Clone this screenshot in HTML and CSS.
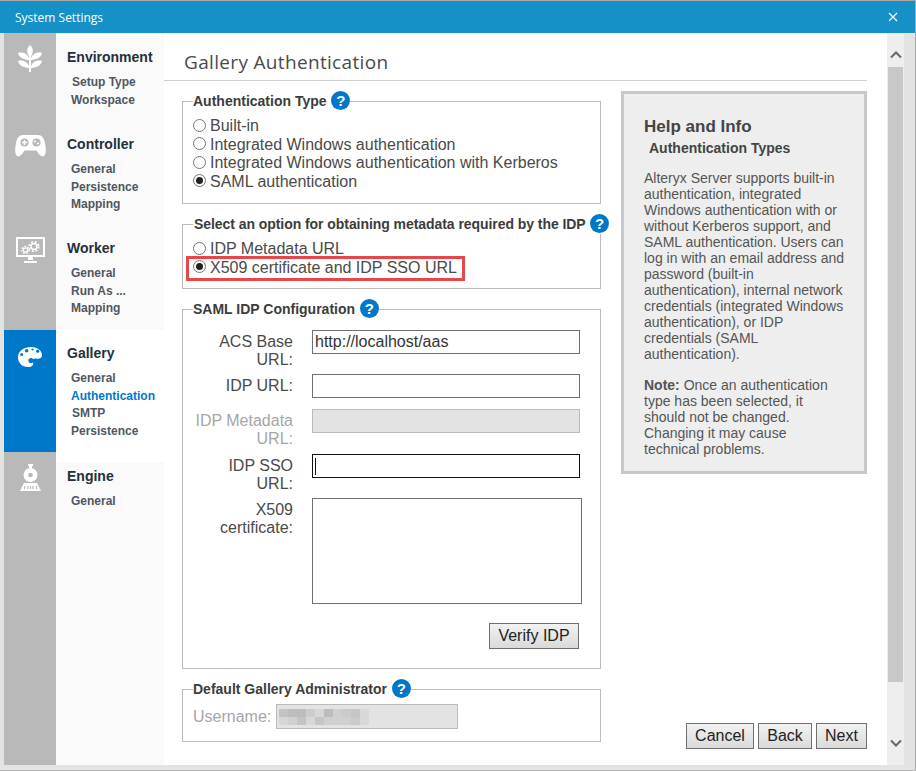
FILE: index.html
```html
<!DOCTYPE html>
<html lang="en">
<head>
    <meta charset="UTF-8">
    <title>System Settings</title>
    <link rel="stylesheet" href="styles.css">
</head>
<body>
<div class="window">
    <div class="titlebar">
        <span class="titlebar-text">System Settings</span>
        <svg class="close-icon" width="10" height="10" viewBox="0 0 10 10"><path d="M1 1l8 8M9 1l-8 8" stroke="#fff" stroke-width="1.2" fill="none"/></svg>
    </div>
    <div class="window-body">
        <nav class="sidebar">
            <div class="nav-section nav-env">
                <div class="nav-rail">
                    <svg class="icon-wheat" width="24" height="27" viewBox="0 0 24 27" fill="#fff">
                        <path d="M12 0C15.500 3 16 8 12 12.500C8 8 8.500 3 12 0Z"/>
                        <path d="M11.500 15C7 15 1 13 0 8C5 6.500 10.500 9 11.500 15Z"/>
                        <path d="M12.500 15C17 15 23 13 24 8C19 6.500 13.500 9 12.500 15Z"/>
                        <path d="M11.500 23C7 23 1 21 0 16C5 14.500 10.500 17 11.500 23Z"/>
                        <path d="M12.500 23C17 23 23 21 24 16C19 14.500 13.500 17 12.500 23Z"/>
                        <rect x="11" y="10" width="2" height="17"/>
                    </svg>
                </div>
                <div class="nav-body">
                    <div class="nav-title">Environment</div>
                    <a class="nav-link nudge">Setup Type</a>
                    <a class="nav-link">Workspace</a>
                </div>
            </div>
            <div class="nav-section nav-controller">
                <div class="nav-rail">
                    <svg class="icon-gamepad" width="31" height="22" viewBox="0 0 31 22">
                        <path fill="#fff" d="M8 0H23C27 0 29 3 30 8C31 13 31.500 19 29 21C27 22.500 24 20 21.500 15.500H9.500C7 20 4 22.500 2 21C-.5 19 0 13 1 8C2 3 4 0 8 0Z"/>
                        <circle cx="9.500" cy="7.500" r="4" fill="#b9b9b9"/>
                        <circle cx="21.500" cy="7.500" r="4" fill="#b9b9b9"/>
                        <path d="M9.500 5v5M7 7.500h5" stroke="#fff" stroke-width="1.500"/>
                        <circle cx="20" cy="6.500" r="1.100" fill="#fff"/>
                        <circle cx="23" cy="8.500" r="1.100" fill="#fff"/>
                    </svg>
                </div>
                <div class="nav-body">
                    <div class="nav-title">Controller</div>
                    <a class="nav-link">General</a>
                    <a class="nav-link">Persistence</a>
                    <a class="nav-link">Mapping</a>
                </div>
            </div>
            <div class="nav-section nav-worker">
                <div class="nav-rail">
                    <svg class="icon-monitor" width="29" height="26" viewBox="0 0 29 26" fill="none" stroke="#fff">
                        <rect x="1" y="1" width="27" height="18" stroke-width="2"/>
                        <circle cx="9.500" cy="13" r="2.200" stroke-width="1.300"/>
                        <circle cx="9.500" cy="13" r="3.600" stroke-width="1.400" stroke-dasharray="1.600 1.500"/>
                        <circle cx="18" cy="9.500" r="3" stroke-width="1.500"/>
                        <circle cx="18" cy="9.500" r="4.800" stroke-width="1.600" stroke-dasharray="2 1.800"/>
                        <path d="M12 20h5v3h-5z" fill="#fff" stroke="none"/>
                        <path d="M8 24h13v2H8z" fill="#fff" stroke="none"/>
                    </svg>
                </div>
                <div class="nav-body">
                    <div class="nav-title">Worker</div>
                    <a class="nav-link">General</a>
                    <a class="nav-link">Run As ...</a>
                    <a class="nav-link">Mapping</a>
                </div>
            </div>
            <div class="nav-section nav-gallery active">
                <div class="nav-rail">
                    <svg class="icon-palette" width="24" height="20" viewBox="0 0 24 20">
                        <path fill="#fff" d="M13 0C20 0 24 4 24 8C24 12 20 12 18 11.500C15.500 11 14 12.500 15 15C16 18 14 20 10 20C4 20 0 16 0 10C0 4 6 0 13 0Z"/>
                        <circle cx="8.700" cy="3.700" r="1.800" fill="#0078c9"/>
                        <circle cx="14.500" cy="2.500" r="1.100" fill="#0078c9"/>
                        <circle cx="19.700" cy="4.200" r="1.600" fill="#0078c9"/>
                        <circle cx="3.700" cy="7.500" r="1.500" fill="#0078c9"/>
                        <circle cx="13" cy="13.500" r="2.600" fill="#0078c9"/>
                    </svg>
                </div>
                <div class="nav-body">
                    <div class="nav-title">Gallery</div>
                    <a class="nav-link">General</a>
                    <a class="nav-link current">Authentication</a>
                    <a class="nav-link nudge">SMTP</a>
                    <a class="nav-link">Persistence</a>
                </div>
            </div>
            <div class="nav-section nav-engine">
                <div class="nav-rail">
                    <svg class="icon-train" width="21" height="27" viewBox="0 0 21 27">
                        <path fill="#fff" d="M8 0h5v2h-1v2h-3V2H8z"/>
                        <circle cx="10.500" cy="11" r="7" fill="#fff"/>
                        <circle cx="10.500" cy="11" r="2.300" fill="#b9b9b9"/>
                        <path fill="#fff" d="M4 19H17L21 27H0Z"/>
                        <path d="M4.500 22v3M8 22v3M10.500 22v3M13 22v3M16.500 22v3" stroke="#b9b9b9" stroke-width="1.200"/>
                    </svg>
                </div>
                <div class="nav-body">
                    <div class="nav-title">Engine</div>
                    <a class="nav-link">General</a>
                </div>
            </div>
        </nav>

        <main class="content">
            <h1 class="page-title">Gallery Authentication</h1>
            <div class="columns">
                <div class="form-col">
                    <fieldset class="group group-type">
                        <legend class="group-legend">Authentication Type <span class="help-dot">?</span></legend>
                        <label class="radio-row"><input type="radio" name="auth"> Built-in</label>
                        <label class="radio-row"><input type="radio" name="auth"> Integrated Windows authentication</label>
                        <label class="radio-row"><input type="radio" name="auth"> Integrated Windows authentication with Kerberos</label>
                        <label class="radio-row"><input type="radio" name="auth" checked> SAML authentication</label>
                    </fieldset>

                    <fieldset class="group group-meta">
                        <legend class="group-legend">Select an option for obtaining metadata required by the IDP <span class="help-dot">?</span></legend>
                        <label class="radio-row"><input type="radio" name="meta"> IDP Metadata URL</label>
                        <label class="radio-row highlighted"><input type="radio" name="meta" checked> X509 certificate and IDP SSO URL</label>
                    </fieldset>

                    <fieldset class="group group-saml">
                        <legend class="group-legend">SAML IDP Configuration <span class="help-dot">?</span></legend>
                        <div class="form-grid">
                            <label class="field-label">ACS Base URL:</label>
                            <input class="field" type="text" value="http://localhost/aas">
                            <label class="field-label">IDP URL:</label>
                            <input class="field" type="text">
                            <label class="field-label disabled">IDP Metadata URL:</label>
                            <input class="field" type="text" disabled>
                            <label class="field-label">IDP SSO URL:</label>
                            <div class="field focused"><span class="caret"></span></div>
                            <label class="field-label">X509 certificate:</label>
                            <textarea class="field-area"></textarea>
                        </div>
                        <div class="verify-row">
                            <button class="btn btn-verify">Verify IDP</button>
                        </div>
                    </fieldset>

                    <fieldset class="group group-admin">
                        <legend class="group-legend">Default Gallery Administrator <span class="help-dot">?</span></legend>
                        <div class="admin-row">
                            <span class="admin-label">Username:</span>
                            <div class="field-blur">
                                <svg width="90" height="16" viewBox="0 0 10 2" preserveAspectRatio="none" shape-rendering="crispEdges">
                                    <rect x="0" y="0" width="1" height="1" fill="#c3c3c3"/><rect x="1" y="0" width="2" height="1" fill="#bdbdbd"/><rect x="3" y="0" width="1" height="1" fill="#cfcccc"/><rect x="4" y="0" width="1" height="1" fill="#d8d6d6"/><rect x="5" y="0" width="1" height="1" fill="#bcbcbc"/><rect x="6" y="0" width="1" height="1" fill="#cfcfcf"/><rect x="7" y="0" width="1" height="1" fill="#cbcbcb"/><rect x="8" y="0" width="1" height="1" fill="#c6c6c6"/><rect x="9" y="0" width="1" height="1" fill="#d8d8d8"/>
                                    <rect x="0" y="1" width="1" height="1" fill="#d6d6d6"/><rect x="1" y="1" width="1" height="1" fill="#d0d0d0"/><rect x="2" y="1" width="1" height="1" fill="#c4c4c4"/><rect x="3" y="1" width="1" height="1" fill="#d8d8d8"/><rect x="4" y="1" width="1" height="1" fill="#c6c6c6"/><rect x="5" y="1" width="1" height="1" fill="#cdd1d1"/><rect x="6" y="1" width="2" height="1" fill="#d0d0d0"/><rect x="8" y="1" width="1" height="1" fill="#cacaca"/><rect x="9" y="1" width="1" height="1" fill="#d8d8d8"/>
                                </svg>
                            </div>
                        </div>
                    </fieldset>
                </div>

                <div class="side-col">
                    <aside class="help-box">
                        <h2 class="help-title">Help and Info</h2>
                        <h3 class="help-sub">Authentication Types</h3>
                        <p class="help-text">Alteryx Server supports built-in authentication, integrated Windows authentication with or without Kerberos support, and SAML authentication. Users can log in with an email address and password (built-in authentication), internal network credentials (integrated Windows authentication), or IDP credentials (SAML authentication).</p>
                        <p class="help-text"><b>Note:</b> Once an authentication type has been selected, it should not be changed. Changing it may cause technical problems.</p>
                    </aside>
                    <div class="wizard-buttons">
                        <button class="btn btn-cancel">Cancel</button>
                        <button class="btn btn-back">Back</button>
                        <button class="btn btn-next">Next</button>
                    </div>
                </div>
            </div>
        </main>

        <div class="scrollbar">
            <svg class="scroll-arrow" width="12" height="8" viewBox="0 0 12 8"><path d="M1 6.500l5-5 5 5" stroke="#666" stroke-width="2" fill="none"/></svg>
            <div class="scroll-thumb"></div>
            <svg class="scroll-arrow arrow-down" width="12" height="8" viewBox="0 0 12 8"><path d="M1 1.500l5 5 5-5" stroke="#666" stroke-width="2" fill="none"/></svg>
        </div>
    </div>
</div>
</body>
</html>
```

FILE: styles.css
```css
* {
    margin: 0;
    padding: 0;
    box-sizing: border-box;
}

body {
    font-family: "Liberation Sans", Arial, sans-serif;
    font-size: 16px;
    color: #4a4a4a;
    overflow: hidden;
    height: 771px;
    width: 916px;
    background: #fff;
}

.window {
    height: 771px;
    display: flex;
    flex-direction: column;
    border-top: 1px solid #a8a8a8;
    border-right: 1px solid #a8a8a8;
    border-bottom: 1px solid #b5b5b5;
}

.titlebar {
    height: 32px;
    flex: none;
    background: #1591c7;
    display: flex;
    align-items: center;
    justify-content: space-between;
    padding: 0 17px 0 15px;
    color: #fff;
}

.titlebar-text {
    font-family: "Open Sans", sans-serif;
    font-size: 12px;
}

.window-body {
    flex: 1;
    min-height: 0;
    display: flex;
    background: #e3e3e3;
    padding: 0 11px 5px 4px;
}

/* sidebar */
.sidebar {
    width: 160px;
    flex: none;
    display: flex;
    flex-direction: column;
}

.nav-section {
    display: flex;
}

.nav-env { height: 88px; }
.nav-controller { height: 104px; }
.nav-worker { height: 105px; }
.nav-gallery { height: 122px; }
.nav-engine { flex: 1; }

.nav-rail {
    width: 52px;
    flex: none;
    background: #b9b9b9;
    display: flex;
    flex-direction: column;
    align-items: center;
}

.nav-body {
    flex: 1;
    background: #fafafa;
    padding: 15px 0 0 11px;
}

.nav-env .nav-body { padding-top: 16px; }
.nav-engine .nav-body { padding-top: 16px; }
.icon-wheat { margin-top: 12px; }
.icon-gamepad { margin-top: 14px; }
.icon-monitor { margin-top: 12px; }
.icon-palette { margin-top: 17px; }
.icon-train { margin-top: 12px; }

.nav-section.active .nav-rail {
    background: #0078c9;
}

.nav-section.active .nav-body {
    background: #fff;
    box-shadow: 0 10px 0 #fff;
    position: relative;
}

.nav-title {
    font-size: 14px;
    line-height: 16px;
    font-weight: bold;
    color: #25303a;
    margin-bottom: 9px;
}

.nav-link {
    display: block;
    font-size: 12px;
    line-height: 17.5px;
    font-weight: bold;
    color: #4f5862;
    padding-left: 4px;
}

.nav-link.nudge { padding-left: 5px; }
.nav-link.current { color: #0078c9; }

/* main */
.content {
    flex: 1;
    min-width: 0;
    background: #fff;
    padding-right: 20px;
}

.page-title {
    font-family: "Open Sans", sans-serif;
    font-size: 19px;
    font-weight: normal;
    letter-spacing: 0.33px;
    color: #4a4a4a;
    height: 48px;
    line-height: 24px;
    padding: 17px 0 0 20px;
    border-bottom: 1px solid #cfcfcf;
}

.columns {
    display: flex;
    padding: 10px 0 0 18px;
    gap: 20px;
    height: 683px;
}

.form-col {
    width: 419px;
    flex: none;
}

.group {
    border: 1px solid #bbb;
    padding: 0 0 0 10px;
    min-width: 0;
    margin-bottom: 10px;
}

.group-legend {
    font-size: 14px;
    font-weight: bold;
    color: #3c3c3c;
    height: 20px;
    line-height: 20px;
    white-space: nowrap;
}

.help-dot {
    display: inline-block;
    width: 19px;
    height: 19px;
    border-radius: 50%;
    background: #0078c9;
    color: #fff;
    font-size: 15px;
    line-height: 19px;
    text-align: center;
    vertical-align: top;
    margin-left: 1px;
    letter-spacing: 0;
}

.group-type { height: 113px; padding-top: 6px; }
.group-meta { height: 75px; padding-top: 6px; }
.group-saml { height: 370px; padding-top: 11px; }
.group-admin { height: 63px; padding-top: 5px; margin-bottom: 0; }

.group-meta .group-legend {
    letter-spacing: -0.06px;
    padding-left: 1px;
}

.radio-row {
    display: flex;
    align-items: center;
    gap: 4px;
    height: 18.5px;
    font-size: 16px;
    color: #4a4a4a;
}

.radio-row input {
    appearance: none;
    width: 13px;
    height: 13px;
    margin-top: -2px;
    border: 1px solid #767676;
    border-radius: 50%;
    background: #fff;
    flex: none;
    display: flex;
    align-items: center;
    justify-content: center;
}

.radio-row input:checked::after {
    content: '';
    width: 7px;
    height: 7px;
    border-radius: 50%;
    background: #222;
}

.highlighted {
    position: relative;
}

.highlighted::after {
    content: '';
    box-sizing: border-box;
    position: absolute;
    left: -7px;
    top: -3px;
    width: 279px;
    height: 25px;
    border: 3px solid #e8474a;
}

.form-grid {
    display: grid;
    grid-template-columns: 100px 270px;
    grid-template-rows: 44px 35px 45px 44px 106px;
    column-gap: 19px;
}

.field-label {
    text-align: right;
    padding-top: 3px;
    line-height: 18.4px;
}

.field-label.disabled { color: #a6a6a6; }

.field {
    display: block;
    width: 268px;
    height: 24px;
    border: 1px solid #707070;
    background: #fff;
    font-family: inherit;
    font-size: 16px;
    color: #333;
    padding: 0 2px;
    outline: none;
}

.field:disabled {
    background: #e3e3e3;
    border-color: #bbb;
}

.field.focused {
    border-color: #111;
    display: flex;
    align-items: center;
}

.caret {
    width: 1px;
    height: 17px;
    background: #111;
}

.field-area {
    display: block;
    width: 270px;
    height: 106px;
    border: 1px solid #707070;
    resize: none;
    outline: none;
}

.verify-row {
    display: flex;
    justify-content: flex-end;
    width: 386px;
    margin-top: 19px;
}

.btn {
    height: 26px;
    padding: 0;
    border: 1px solid #707070;
    background: linear-gradient(#f2f2f2, #dadada);
    font-family: inherit;
    font-size: 16px;
    color: #222;
}

.btn-verify { width: 90px; }
.btn-cancel { width: 68px; }
.btn-back { width: 54px; }
.btn-next { width: 51px; }

.admin-row {
    display: flex;
    align-items: center;
    gap: 4px;
}

.admin-label {
    color: #a6a6a6;
    width: 79px;
}

.field-blur {
    width: 182px;
    height: 25px;
    background: #e3e3e3;
    border: 1px solid #bbb;
    padding: 4px 0 0 2px;
}

.field-blur svg { display: block; }

/* help panel */
.side-col {
    width: 246px;
    flex: none;
    display: flex;
    flex-direction: column;
    justify-content: space-between;
    height: 658px;
}

.help-box {
    height: 383px;
    background: #eee;
    border: 3px solid #c8c8c8;
    padding: 23px 20px 0 20px;
    color: #555;
}

.help-title {
    font-size: 17px;
    line-height: 20px;
    color: #444;
}

.help-sub {
    font-size: 14px;
    line-height: 16px;
    color: #444;
    margin: 3px 0 14px 5px;
}

.help-text {
    font-size: 14px;
    line-height: 16px;
    margin-bottom: 15px;
}

.wizard-buttons {
    display: flex;
    justify-content: flex-end;
    gap: 4px;
}

/* scrollbar */
.scrollbar {
    width: 17px;
    flex: none;
    background: #eee;
    display: flex;
    flex-direction: column;
    align-items: center;
    padding-top: 18px;
}

.scroll-arrow { flex: none; }

.scroll-thumb {
    width: 15px;
    height: 615px;
    background: #c8c8c8;
    margin-top: 8px;
}

.arrow-down { margin-top: 57px; }
```
